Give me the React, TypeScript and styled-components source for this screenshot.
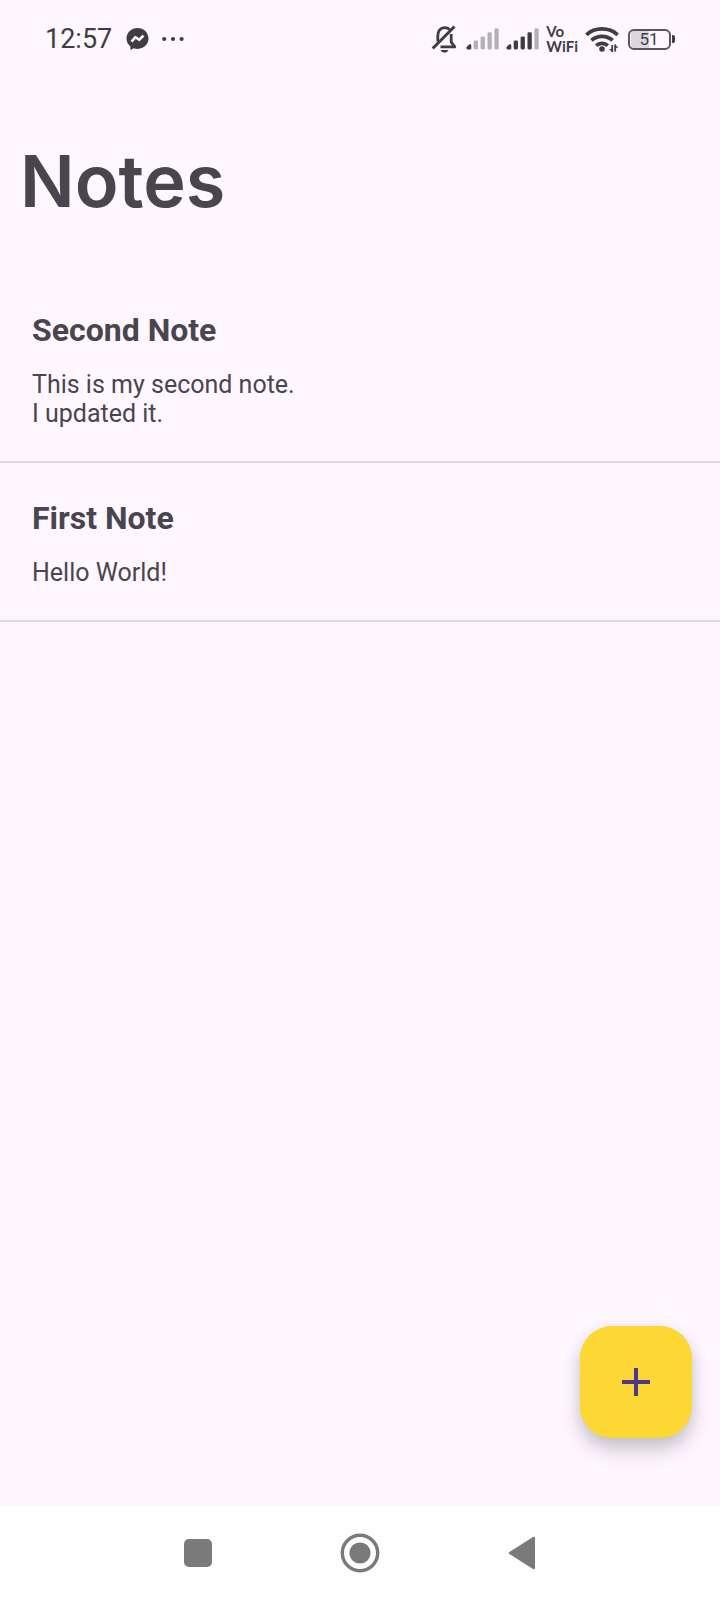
import React from "react";
import styled, { createGlobalStyle } from "styled-components";

const ink = "#49454e";
const statusInk = "#3f3d41";
const statusMuted = "#b5afb7";
const surface = "#fef7ff";

const GlobalStyle = createGlobalStyle`
  *, *::before, *::after { box-sizing: border-box; }
  body {
    margin: 0;
    background: ${surface};
    color: ${ink};
    font-family: Roboto, "Liberation Sans", sans-serif;
  }
`;

const Screen = styled.div`
  min-height: 100vh;
  display: flex;
  flex-direction: column;
`;

const StatusBar = styled.header`
  display: flex;
  align-items: center;
  justify-content: space-between;
  height: 78px;
  padding: 0 45px;
  color: ${statusInk};
`;

const StatusGroup = styled.div<{ $gap: number }>`
  display: flex;
  align-items: center;
  gap: ${({ $gap }) => $gap}px;
`;

const Clock = styled.time`
  font-size: 27px;
  line-height: 32px;
  font-weight: 400;
  margin-right: 3px;
`;

const CallingLabel = styled.span`
  display: flex;
  flex-direction: column;
  font-family: Lato, sans-serif;
  font-size: 15px;
  font-weight: 700;
  line-height: 15px;
`;

const BatteryShell = styled.span`
  display: flex;
  align-items: center;
  gap: 1px;

  &::after {
    content: "";
    width: 3px;
    height: 8px;
    border-radius: 0 2px 2px 0;
    background: ${statusInk};
  }
`;

const BatteryCell = styled.span`
  display: flex;
  align-items: center;
  justify-content: center;
  width: 43px;
  height: 21px;
  border: 2px solid #59565b;
  border-radius: 6px;
  padding: 0 2px 0 1px;
  background: linear-gradient(to right, #ddd6df 50%, transparent 50%) content-box;
  font-size: 17px;
  line-height: 17px;
`;

const Main = styled.main`
  position: relative;
  flex: 1;
`;

const Title = styled.h1`
  margin: 0;
  padding: 59px 20px 50px;
  font-family: Inter, sans-serif;
  font-size: 72px;
  line-height: 88px;
  font-weight: 600;
`;

const NoteList = styled.ul`
  list-style: none;
  margin: 0;
  padding: 0;
`;

const NoteItem = styled.li`
  padding: 36px 32px 33px;
  border-bottom: 2px solid #dfd9e0;
`;

const NoteTitle = styled.h2`
  margin: 0 0 21px;
  font-size: 32px;
  line-height: 38px;
  font-weight: 700;
`;

const NoteBody = styled.p`
  margin: 0;
  font-size: 25px;
  line-height: 29px;
  white-space: pre-line;
`;

const AddButton = styled.button`
  position: absolute;
  right: 28px;
  bottom: 68px;
  display: flex;
  align-items: center;
  justify-content: center;
  width: 112px;
  height: 112px;
  border: 0;
  border-radius: 32px;
  background: #fdd835;
  color: #4f378b;
  box-shadow: 0 12px 20px rgba(0, 0, 0, 0.2), 0 2px 14px rgba(0, 0, 0, 0.06);
  cursor: pointer;
`;

const NavBar = styled.nav`
  display: flex;
  justify-content: center;
  height: 94px;
  background: #fefefe;
`;

const NavButton = styled.button`
  display: flex;
  align-items: center;
  justify-content: center;
  width: 162px;
  padding: 0;
  border: 0;
  background: none;
  color: #7a7a7a;
  cursor: pointer;
`;

const MessengerIcon = () => (
  <svg width="24" height="24" viewBox="0 0 24 24" aria-hidden="true">
    <path
      fill="currentColor"
      d="M11.500 1C5.500 1 .5 5.500 .5 11.600c0 3.200 1.400 5.900 3.900 7.800V23l3.300-1.700c1.200.4 2.400.6 3.800.6 6.300 0 11-4.400 11-10.300S17.800 1 11.500 1z"
    />
    <path
      d="M5.500 14.700l4-4.500 3.700 2.600 4.300-4.200"
      fill="none"
      stroke={surface}
      strokeWidth="2.600"
      strokeLinejoin="round"
    />
  </svg>
);

const MoreIcon = () => (
  <svg width="24" height="6" viewBox="0 0 24 6" fill="currentColor" aria-hidden="true">
    <circle cx="3.200" cy="3" r="2.100" />
    <circle cx="12" cy="3" r="2.100" />
    <circle cx="20.600" cy="3" r="2.100" />
  </svg>
);

const MutedBellIcon = () => (
  <svg width="28" height="28" viewBox="0 0 28 28" fill="none" stroke="currentColor" strokeWidth="2.800" aria-hidden="true">
    <path d="M6.800 16.500V11C6.800 6 9.500 2.600 13.500 2.600c2.200 0 4 .7 5.200 2" />
    <path d="M20.200 9v8.200l3.600 4.600H9.500" strokeLinejoin="round" />
    <path d="M1.700 23.500L23.500 1.500" strokeWidth="3" />
    <path d="M9.500 25h8c-.8 1.700-2.200 2.600-4 2.600s-3.200-.9-4-2.600z" fill="currentColor" stroke="none" />
  </svg>
);

const SignalIcon = ({ level }: { level: number }) => (
  <svg width="33" height="22" viewBox="0 0 33 22" role="img" aria-label={`Signal ${level} of 5`}>
    <path d="M0.500 20.200v-1.200l2.800-2.800h.8q1.200 0 1.200 1.200v2.800q0 1.300-1.200 1.300h-2.400q-1.200 0-1.200-1.300z" fill={statusInk} />
    {[1, 2, 3, 4].map((i) => (
      <rect
        key={i}
        x={0.8 + i * 6.9}
        y={16.5 - i * 4.05}
        width="4.300"
        height={5 + i * 4.05}
        rx="1.400"
        fill={i < level ? statusInk : statusMuted}
      />
    ))}
  </svg>
);

const WifiIcon = () => (
  <svg width="36" height="28" viewBox="0 0 36 28" fill="none" stroke="currentColor" strokeWidth="3.800" aria-hidden="true">
    <path d="M1.400 9.800C10.100 2 23.900 2 32.600 9.800" />
    <path d="M6.400 15.400C12.300 10 21.700 10 27.600 15.400" />
    <path d="M11.200 20.600C14.300 17.600 19.700 17.600 22.800 20.600" />
    <circle cx="17" cy="24" r="2.800" fill="currentColor" stroke="none" />
    <path d="M27.200 20v7M30.200 19.500v7" strokeWidth="1.800" />
    <path d="M27.500 24v3.200l-3.600-3.200zM29.900 22.700v-3.200l3.600 3.200z" fill="currentColor" stroke="none" />
  </svg>
);

const PlusIcon = () => (
  <svg width="28" height="28" viewBox="0 0 28 28" fill="currentColor" aria-hidden="true">
    <path d="M12 0h4v12h12v4H16v12h-4V16H0v-4h12z" />
  </svg>
);

const RecentsIcon = () => (
  <svg width="30" height="30" viewBox="0 0 30 30" aria-hidden="true">
    <rect x="1" y="1" width="28" height="28" rx="5" fill="currentColor" />
  </svg>
);

const HomeIcon = () => (
  <svg width="40" height="40" viewBox="0 0 40 40" aria-hidden="true">
    <circle cx="20" cy="20" r="17.700" fill="none" stroke="currentColor" strokeWidth="3.400" />
    <circle cx="20" cy="20" r="10.600" fill="currentColor" />
  </svg>
);

const BackIcon = () => (
  <svg width="28" height="34" viewBox="0 0 28 34" aria-hidden="true">
    <path d="M1.400 15.900L25 .9c1-.6 2-.1 2 1v30.200c0 1.100-1 1.600-2 1L1.400 18.100c-.9-.6-.9-1.600 0-2.200z" fill="currentColor" />
  </svg>
);

const notes = [
  { title: "Second Note", body: "This is my second note.\nI updated it." },
  { title: "First Note", body: "Hello World!" },
];

export default function App() {
  return (
    <>
      <GlobalStyle />
      <Screen>
        <StatusBar>
          <StatusGroup $gap={11}>
            <Clock>12:57</Clock>
            <MessengerIcon />
            <MoreIcon />
          </StatusGroup>
          <StatusGroup $gap={7}>
            <MutedBellIcon />
            <SignalIcon level={1} />
            <SignalIcon level={4} />
            <CallingLabel>
              <span>Vo</span>
              <span>WiFi</span>
            </CallingLabel>
            <WifiIcon />
            <BatteryShell>
              <BatteryCell>51</BatteryCell>
            </BatteryShell>
          </StatusGroup>
        </StatusBar>
        <Main>
          <Title>Notes</Title>
          <NoteList>
            {notes.map((note) => (
              <NoteItem key={note.title}>
                <NoteTitle>{note.title}</NoteTitle>
                <NoteBody>{note.body}</NoteBody>
              </NoteItem>
            ))}
          </NoteList>
          <AddButton type="button" aria-label="Add note">
            <PlusIcon />
          </AddButton>
        </Main>
        <NavBar aria-label="System navigation">
          <NavButton type="button" aria-label="Recent apps">
            <RecentsIcon />
          </NavButton>
          <NavButton type="button" aria-label="Home">
            <HomeIcon />
          </NavButton>
          <NavButton type="button" aria-label="Back">
            <BackIcon />
          </NavButton>
        </NavBar>
      </Screen>
    </>
  );
}
